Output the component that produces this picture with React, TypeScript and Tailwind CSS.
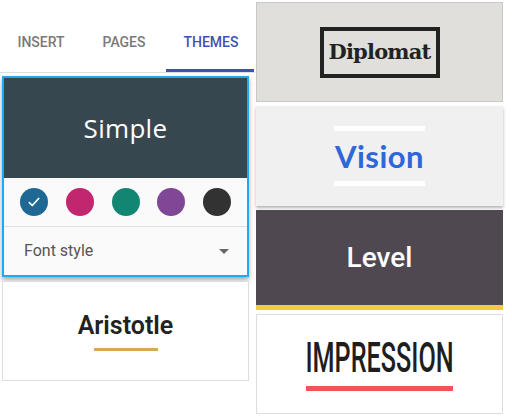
const colors = ["#1f6894", "#c2266e", "#128672", "#7f4795", "#323232"];

function Tabs() {
  return (
    <div className="flex h-[73px] border-b border-[#e0e0e0] font-['Roboto',sans-serif] text-[14px] font-medium">
      <div className="flex w-[82px] flex-col items-center justify-end text-[#7a7a7a]">
        <span className="pb-[16px]">INSERT</span>
        <div className="h-[3px] w-full" />
      </div>
      <div className="flex w-[84px] flex-col items-center justify-end text-[#7a7a7a]">
        <span className="pb-[16px]">PAGES</span>
        <div className="h-[3px] w-full" />
      </div>
      <div className="flex w-[88px] flex-col items-center justify-end text-[#3f51b5]">
        <span className="pb-[16px] pl-[2px]">THEMES</span>
        <div className="h-[3px] w-full bg-[#3f51b5]" />
      </div>
    </div>
  );
}

export default function App() {
  return (
    <div className="flex h-[418px] w-[512px] bg-white font-['Roboto',sans-serif]">
      <div className="flex w-[255px] flex-col">
        <Tabs />
        <div className="flex flex-col gap-[4px] pl-[2px] pt-[3px] pr-[6px]">
          <div className="flex flex-col border-2 border-[#1eaaf1] bg-[#fafafa] shadow-[0_3px_5px_rgba(0,0,0,0.35)]">
            <div className="flex h-[100px] items-center justify-center bg-[#37474f] font-['Open_Sans',sans-serif] text-[26px] font-normal tracking-[0.3px] text-white">
              Simple
            </div>
            <div className="flex h-[49px] items-center justify-between border-b border-[#e0e0e0] px-[16px]">
              {colors.map((c, i) => (
                <div
                  key={c}
                  className="flex h-[28px] w-[28px] items-center justify-center rounded-full"
                  style={{ backgroundColor: c }}
                >
                  {i === 0 && (
                    <svg width="14" height="14" viewBox="0 0 24 24" fill="none" stroke="white" strokeWidth="3" strokeLinecap="round" strokeLinejoin="round">
                      <path d="M4 13l5 5L20 6" />
                    </svg>
                  )}
                </div>
              ))}
            </div>
            <div className="flex h-[48px] items-center justify-between pl-[20px] pr-[18px] text-[16px] text-[#555]">
              <span>Font style</span>
              <svg width="10" height="5" viewBox="0 0 10 5">
                <path d="M0 0h10L5 5z" fill="#666" />
              </svg>
            </div>
          </div>
          <div className="flex h-[100px] flex-col items-center justify-center gap-[10px] border border-[#ddd] bg-white">
            <span className="pt-[2px] text-[25px] font-semibold leading-none text-[#222]">Aristotle</span>
            <div className="h-[3px] w-[64px] bg-[#d4a95a]" />
          </div>
        </div>
      </div>

      <div className="flex w-[248px] flex-col gap-[4px] pt-[2px] pl-[1px]">
        <div className="flex h-[100px] items-center justify-center border border-[#c8c8c4] bg-[#e0dfdb]">
          <div className="flex h-[51px] w-[120px] items-center justify-center border-[4px] border-[#222] font-['DejaVu_Serif',serif] text-[21px] font-bold tracking-[-0.8px] text-[#222]">
            Diplomat
          </div>
        </div>
        <div className="flex h-[100px] flex-col items-center justify-center gap-[4px] bg-[#f0f0f0] shadow-[0_2px_3px_rgba(0,0,0,0.3)]">
          <div className="h-[5px] w-[91px] bg-white" />
          <span className="font-['Lato',sans-serif] text-[31px] font-bold leading-[42px] tracking-[0.5px] text-[#2f66d8]">
            Vision
          </span>
          <div className="h-[5px] w-[91px] bg-white" />
        </div>
        <div className="flex h-[100px] flex-col bg-[#4f4850]">
          <div className="flex flex-1 items-center justify-center text-[28px] font-medium text-white">Level</div>
          <div className="h-[5px] bg-[#f7c940]" />
        </div>
        <div className="flex h-[100px] flex-col items-center justify-center gap-[8px] border border-[#ddd] bg-white">
          <span className="origin-center scale-x-[0.6] font-['Roboto',sans-serif] text-[42px] font-medium leading-[40px] text-[#1e1e1e]">
            IMPRESSION
          </span>
          <div className="h-[5px] w-[147px] bg-[#f25454]" />
        </div>
      </div>
    </div>
  );
}
